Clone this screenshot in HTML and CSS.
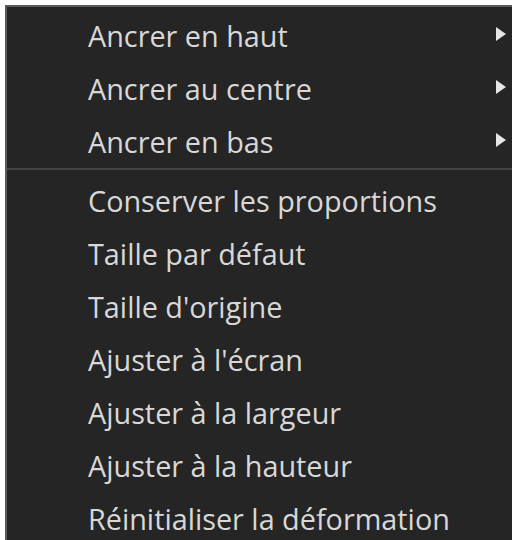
FILE: index.html
```html
<!DOCTYPE html>
<html lang="fr">
<head>
<meta charset="utf-8">
<link rel="stylesheet" href="styles.css">
</head>
<body>
<div class="menu">
  <ul class="group">
    <li class="item sub"><span class="label">Ancrer en haut</span><span class="arrow"></span></li>
    <li class="item sub"><span class="label">Ancrer au centre</span><span class="arrow"></span></li>
    <li class="item sub"><span class="label">Ancrer en bas</span><span class="arrow"></span></li>
  </ul>
  <div class="sep"></div>
  <ul class="group">
    <li class="item"><span class="label">Conserver les proportions</span></li>
    <li class="item"><span class="label">Taille par défaut</span></li>
    <li class="item"><span class="label">Taille d'origine</span></li>
    <li class="item"><span class="label">Ajuster à l'écran</span></li>
    <li class="item"><span class="label">Ajuster à la largeur</span></li>
    <li class="item"><span class="label">Ajuster à la hauteur</span></li>
    <li class="item"><span class="label">Réinitialiser la déformation</span></li>
  </ul>
</div>
</body>
</html>
```
FILE: styles.css
```css
html, body {
  margin: 0;
  padding: 0;
  background: #ffffff;
  height: 100%;
  overflow: hidden;
}
body {
  padding: 5px 0 0 5px;
  box-sizing: border-box;
}
.menu {
  background: #252525;
  border-top: 2px solid #5a5a5a;
  border-left: 2px solid #5a5a5a;
  height: 100%;
  box-sizing: border-box;
  overflow: hidden;
  padding-top: 2px;
  font-family: "Open Sans", "Noto Sans", sans-serif;
  font-size: 28.8px;
  color: #d8d8d8;
}
.group {
  list-style: none;
  margin: 0;
  padding: 0;
}
.item {
  height: 53px;
  display: flex;
  align-items: center;
  justify-content: space-between;
  padding-left: 81px;
  padding-right: 6px;
  white-space: nowrap;
}
.arrow {
  width: 0;
  height: 0;
  border-top: 7px solid transparent;
  border-bottom: 7px solid transparent;
  border-left: 10px solid #e6e6e6;
  margin-top: -3px;
}
.sep {
  height: 2px;
  background: #444444;
  margin: 0 0 4px 0;
}
```
